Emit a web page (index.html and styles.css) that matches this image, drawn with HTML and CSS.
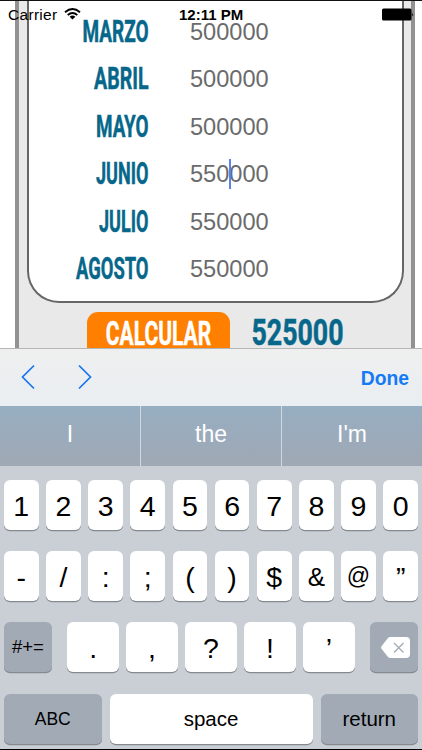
FILE: index.html
```html
<!DOCTYPE html>
<html lang="es">
<head>
  <meta charset="UTF-8" />
  <title>Calcular</title>
  <meta name="viewport" content="width=device-width, initial-scale=1.0"/>
  <link rel="stylesheet" href="styles.css">
</head>
<body>
  <div class="phone">
    <div class="status">
      <span class="carrier">Carrier</span>
      <svg class="wifi" width="17" height="12" viewBox="0 0 17 12">
        <path d="M1 4.200Q8.500 -2 16 4.200M3.700 6.900Q8.500 2.900 13.300 6.900" fill="none" stroke="#000" stroke-width="1.900"/>
        <path d="M5.600 8.700Q8.500 6.400 11.400 8.700L8.500 11.600Z"/>
      </svg>
      <span class="time">12:11 PM</span>
      <svg class="battery" width="33" height="13" viewBox="0 0 33 13">
        <rect x="0" y="0.500" width="29.500" height="12" rx="1.500"/>
        <path d="M30.300 4.500Q32 6.500 30.300 8.500Z"/>
      </svg>
    </div>

    <main class="app">
      <div class="frame">
        <div class="card">
          <div class="row">
            <svg class="month" viewBox="0 0 90 30"><text x="23.500" y="26" textLength="66" lengthAdjust="spacingAndGlyphs">MARZO</text></svg>
            <span class="value">500000</span>
          </div>
          <div class="row">
            <svg class="month" viewBox="0 0 90 30"><text x="35" y="26" textLength="54.500" lengthAdjust="spacingAndGlyphs">ABRIL</text></svg>
            <span class="value">500000</span>
          </div>
          <div class="row">
            <svg class="month" viewBox="0 0 90 30"><text x="37" y="26" textLength="52.500" lengthAdjust="spacingAndGlyphs">MAYO</text></svg>
            <span class="value">500000</span>
          </div>
          <div class="row">
            <svg class="month" viewBox="0 0 90 30"><text x="37" y="26" textLength="52.500" lengthAdjust="spacingAndGlyphs">JUNIO</text></svg>
            <span class="value">550000<i class="caret"></i></span>
          </div>
          <div class="row">
            <svg class="month" viewBox="0 0 90 30"><text x="40" y="26" textLength="49.500" lengthAdjust="spacingAndGlyphs">JULIO</text></svg>
            <span class="value">550000</span>
          </div>
          <div class="row">
            <svg class="month" viewBox="0 0 90 30"><text x="17" y="26" textLength="72.500" lengthAdjust="spacingAndGlyphs">AGOSTO</text></svg>
            <span class="value">550000</span>
          </div>
        </div>
        <div class="actions">
          <button class="calc">
            <svg class="calc-text" viewBox="0 0 144 40"><text x="19" y="33" textLength="106" lengthAdjust="spacingAndGlyphs">CALCULAR</text></svg>
          </button>
          <svg class="result" viewBox="0 0 100 40"><text x="1.500" y="33" textLength="92" lengthAdjust="spacingAndGlyphs">525000</text></svg>
        </div>
      </div>
    </main>

    <div class="accessory">
      <svg class="arrows" width="72" height="26" viewBox="0 0 72 26">
        <path d="M13 1.500L1.500 13L13 24.500M58 1.500L69.500 13L58 24.500"/>
      </svg>
      <span class="done">Done</span>
    </div>

    <div class="suggest">
      <span>I</span>
      <span>the</span>
      <span>I'm</span>
    </div>

    <div class="keyboard">
      <div class="keys">
        <b>1</b><b>2</b><b>3</b><b>4</b><b>5</b><b>6</b><b>7</b><b>8</b><b>9</b><b>0</b>
      </div>
      <div class="keys">
        <b>-</b><b>/</b><b>:</b><b>;</b><b>(</b><b>)</b><b>$</b><b class="small">&amp;</b><b class="at">@</b><b>”</b>
      </div>
      <div class="keys keys-punct">
        <b class="dark symbols">#+=</b>
        <div class="punct">
          <b>.</b><b>,</b><b>?</b><b>!</b><b>’</b>
        </div>
        <b class="dark delete">
          <svg width="29" height="21" viewBox="0 0 29 21">
            <path d="M9 0H25Q29 0 29 4V17Q29 21 25 21H9Q8 21 7 20L0.700 12Q-0.500 10.500 0.700 9L7 1Q8 0 9 0Z" fill="#fff"/>
            <path d="M13 6L22.500 15.500M22.500 6L13 15.500" stroke="#a2aab6" stroke-width="1.300"/>
          </svg>
        </b>
      </div>
      <div class="keys keys-bottom">
        <b class="dark abc">ABC</b>
        <b class="word">space</b>
        <b class="dark word">return</b>
      </div>
    </div>
  </div>
</body>
</html>
```
FILE: styles.css
```css
* { box-sizing: border-box; }
body { margin: 0; background: #fff; font-family: "Liberation Sans", Arial, sans-serif; color: #000; }
.phone {
  position: relative;
  width: 422px;
  height: 750px;
  overflow: hidden;
  display: flex;
  flex-direction: column;
  border-top: 1px solid #111;
  border-bottom: 1px solid #000;
}

/* status bar floats over the scrolled form */
.status {
  position: absolute;
  top: 0;
  left: 0;
  width: 422px;
  height: 27px;
  padding: 0 7px 0 8px;
  display: grid;
  grid-template-columns: 56px 115px 1fr 33px;
  align-items: center;
  font-size: 15.500px;
  z-index: 2;
}
.carrier { letter-spacing: 0.300px; }
.wifi { margin-top: -2px; }
.time { font-weight: bold; font-size: 15px; white-space: nowrap; }

.app { height: 347px; overflow: hidden; padding: 0 7px 0 15px; }
.frame {
  width: 400px;
  height: 400px;
  background: #e9e9e9;
  border: solid #929292;
  border-width: 0 4px;
  padding: 0 7.500px 0 8px;
}
.card {
  height: 302px;
  background: #fff;
  border: 2.500px solid #666;
  border-top: 0;
  border-radius: 0 0 32px 32px;
  padding-top: 14.500px;
}
.row { display: flex; height: 47.500px; padding-left: 30px; }
.month { width: 90px; height: 30px; overflow: visible; }
.month text, .calc-text text, .result text {
  font-family: Roboto, sans-serif;
  font-weight: 700;
  font-size: 30.500px;
  fill: #07678a;
  stroke: #07678a;
  stroke-width: 0.500px;
}
.value {
  position: relative;
  height: 30px;
  line-height: 30px;
  margin: 1px 0 0 41px;
  font-size: 23.600px;
  color: #6b6b6b;
}
.caret { position: absolute; left: 38.500px; top: 0; width: 2px; height: 30px; background: #5d7ff0; }

.actions { display: flex; margin-top: 9px; padding-left: 60px; gap: 20px; }
.calc { width: 143px; height: 48px; border: 0; padding: 0; border-radius: 11px; background: #ff8000; display: flex; }
.calc-text { width: 144px; height: 40px; }
.calc-text text { font-size: 34px; fill: #fff; stroke: #fff; }
.result { width: 100px; height: 40px; }
.result text { font-size: 37px; }

.accessory {
  height: 58px;
  background: linear-gradient(#efefef, #e9eef2);
  border-top: 1px solid #b4b6b8;
  display: flex;
  justify-content: space-between;
  align-items: center;
  padding: 0 13px 0 21px;
}
.arrows { margin-top: -2px; }
.arrows path { fill: none; stroke: #1675ee; stroke-width: 1.700; }
.done { font-size: 19.300px; font-weight: bold; color: #147af5; padding-top: 3px; }

.suggest {
  height: 60px;
  background: linear-gradient(#96aec1, #a0a8b5);
  display: grid;
  grid-template-columns: 140px 1fr 141px;
  color: #fff;
  font-size: 23px;
  line-height: 56px;
  text-align: center;
}
.suggest span + span { border-left: 1px solid #d0d9e1; }

.keyboard {
  flex: 1;
  background: #cacfd6;
  padding: 14px 4px 0;
  display: flex;
  flex-direction: column;
  gap: 20.200px;
}
.keys { display: grid; grid-template-columns: repeat(10, 34.600px); justify-content: space-between; height: 51px; }
.keys b {
  height: 50px;
  display: flex;
  align-items: center;
  justify-content: center;
  padding-top: 2px;
  font-weight: normal;
  font-size: 28.500px;
  background: #fff;
  border-radius: 6px;
  box-shadow: 0 1.200px 0 #858a91;
}
.keys .small { font-size: 26px; }
.keys .at { font-size: 23px; padding-top: 0; }
.keys-punct { grid-template-columns: 47.700px 288px 47.700px; }
.punct { display: grid; grid-template-columns: repeat(5, 52.300px); justify-content: space-between; }
.keys-bottom { grid-template-columns: 97.500px 203px 97.500px; }
.keys .dark { background: #a2aab6; }
.keys .symbols { font-size: 18.500px; padding-top: 0; }
.keys .word { font-size: 20.500px; padding-top: 0; }
.keys .abc { font-size: 17.500px; }
.keys .delete { padding: 0 0 0 2px; }
```
